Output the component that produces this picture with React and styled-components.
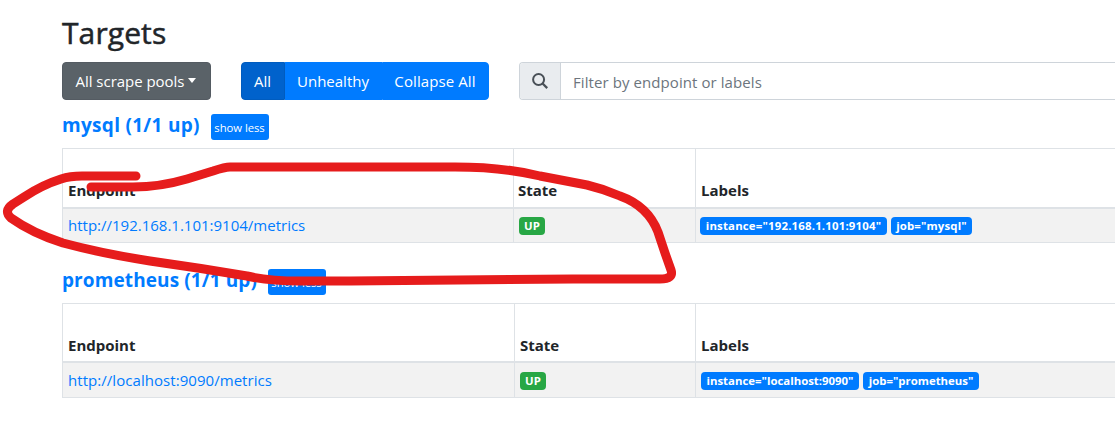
import React from "react";
import styled, { createGlobalStyle } from "styled-components";

const GlobalStyle = createGlobalStyle`
  *, *::before, *::after { box-sizing: border-box; }
  html, body { margin: 0; overflow: hidden; background: #fff; }
  body {
    font-family: "Open Sans", "Noto Sans", sans-serif;
    font-size: 15px;
    line-height: 24px;
    color: #212529;
  }
`;

const Page = styled.main`
  position: relative;
  width: 100%;
  height: 422px;
  padding: 14px 0 0 62px;
  overflow: hidden;
`;

const Title = styled.h2`
  margin: 0 0 10px;
  font-size: 30px;
  font-weight: 500;
  line-height: 38px;
  letter-spacing: 0.1px;
  -webkit-text-stroke: 0.5px #212529;
`;

const Toolbar = styled.div`
  display: flex;
  gap: 30px;
  height: 38px;
`;

const Button = styled.button`
  display: flex;
  align-items: center;
  justify-content: center;
  flex: none;
  width: ${(p) => p.$width}px;
  height: 38px;
  padding: 0 1px 1px 0;
  border: 1px solid ${(p) => p.$border || p.$bg};
  border-radius: 4px;
  background: ${(p) => p.$bg};
  color: #fff;
  font: inherit;
  letter-spacing: ${(p) => p.$track || 0}px;
  white-space: nowrap;
`;

const Caret = styled.span`
  margin: 0 0 0 4px;
  border-top: 5px solid #fff;
  border-left: 4.5px solid transparent;
  border-right: 4.5px solid transparent;
`;

const ButtonGroup = styled.div`
  display: flex;
  flex: none;

  ${Button} { border-radius: 0; }
  ${Button}:first-child { border-radius: 4px 0 0 4px; }
  ${Button}:last-child { border-radius: 0 4px 4px 0; }
`;

const Search = styled.div`
  display: flex;
  flex: 1;
  border: 1px solid #ced4da;
  border-right: 0;
  border-radius: 4px 0 0 4px;
  overflow: hidden;
`;

const SearchAddon = styled.div`
  display: flex;
  align-items: center;
  justify-content: center;
  width: 41px;
  border-right: 1px solid #ced4da;
  background: #e9ecef;
`;

const SearchInput = styled.input`
  flex: 1;
  min-width: 0;
  padding: 2px 12px 0;
  border: 0;
  outline: 0;
  background: #fff;
  font: inherit;
  letter-spacing: 0.08px;
  &::placeholder { color: #6c757d; opacity: 1; }
`;

const PoolHeader = styled.div`
  display: flex;
  align-items: center;
  gap: 11px;
  height: 26px;
  margin: ${(p) => p.$top}px 0 8px;
`;

const PoolName = styled.h3`
  flex: none;
  width: ${(p) => p.$width}px;
  margin: 0;
  padding-bottom: 3px;
  color: #007bff;
  font-size: 19px;
  font-weight: 700;
  line-height: 23px;
  letter-spacing: ${(p) => p.$track}px;
  white-space: nowrap;
`;

const ToggleButton = styled.button`
  width: 58px;
  height: 26px;
  padding: 1px 1px 0 0;
  border: 0;
  border-radius: 3px;
  background: #007bff;
  color: #fff;
  font-family: inherit;
  font-size: 11.3px;
  font-weight: 500;
  letter-spacing: -0.05px;
  white-space: nowrap;
`;

const Table = styled.div`
  width: 1080px;
  border: 1px solid #dee2e6;
`;

const Row = styled.div`
  display: grid;
  grid-template-columns: ${(p) => p.$first}px ${(p) => 632 - p.$first}px 1fr;
  height: ${(p) => p.$height}px;
`;

const HeadRow = styled(Row)`
  border-bottom: 2px solid #dee2e6;
  font-weight: 700;
`;

const BodyRow = styled(Row)`
  background: #f2f2f2;
`;

const Cell = styled.div`
  display: flex;
  align-items: ${(p) => (p.$head ? "flex-end" : "center")};
  gap: 4px;
  padding: 0 5px ${(p) => p.$bottom || 0}px ${(p) => p.$left || 5}px;
  border-left: 1px solid #dee2e6;
  &:first-child { border-left: 0; }
`;

const Link = styled.a`
  color: #007bff;
  text-decoration: none;
  letter-spacing: ${(p) => p.$track}px;
`;

const Badge = styled.span`
  display: flex;
  align-items: center;
  justify-content: center;
  width: ${(p) => p.$width}px;
  height: 18px;
  margin-top: 2px;
  border-radius: 4px;
  background: ${(p) => p.$bg || "#007bff"};
  color: #fff;
  font-size: 11.4px;
  font-weight: 700;
  line-height: 18px;
  letter-spacing: ${(p) => p.$track || 0}px;
  white-space: nowrap;
`;

const Annotation = styled.svg`
  position: absolute;
  top: 0;
  left: 0;
  pointer-events: none;
`;

const pools = [
  {
    name: "mysql (1/1 up)", nameWidth: 138, nameTrack: 0.3, top: 14, first: 450, head: 60, body: 33,
    headBottom: 5, bodyBottom: 1, labelLeft: 4,
    url: "http://192.168.1.101:9104/metrics", urlTrack: 0,
    labels: [
      { text: 'instance="192.168.1.101:9104"', width: 187, track: 0.19 },
      { text: 'job="mysql"', width: 81, track: 0.15 },
    ],
  },
  {
    name: "prometheus (1/1 up)", nameWidth: 195, nameTrack: 0.1, top: 26, first: 451, head: 59, body: 34,
    headBottom: 4, bodyBottom: 0, labelLeft: 5,
    url: "http://localhost:9090/metrics", urlTrack: 0.05,
    labels: [
      { text: 'instance="localhost:9090"', width: 158, track: 0 },
      { text: 'job="prometheus"', width: 116, track: 0 },
    ],
  },
];

function Pool({ pool }) {
  return (
    <section>
      <PoolHeader $top={pool.top}>
        <PoolName $width={pool.nameWidth} $track={pool.nameTrack}>{pool.name}</PoolName>
        <ToggleButton>show less</ToggleButton>
      </PoolHeader>
      <Table>
        <HeadRow $first={pool.first} $height={pool.head}>
          <Cell $head $bottom={pool.headBottom}>Endpoint</Cell>
          <Cell $head $bottom={pool.headBottom} $left={pool.labelLeft}>State</Cell>
          <Cell $head $bottom={pool.headBottom}>Labels</Cell>
        </HeadRow>
        <BodyRow $first={pool.first} $height={pool.body}>
          <Cell $bottom={pool.bodyBottom}><Link $track={pool.urlTrack}>{pool.url}</Link></Cell>
          <Cell $bottom={pool.bodyBottom}><Badge $bg="#28a745" $width={26}>UP</Badge></Cell>
          <Cell $bottom={pool.bodyBottom} $left={pool.labelLeft}>
            {pool.labels.map((l) => (
              <Badge key={l.text} $width={l.width} $track={l.track}>{l.text}</Badge>
            ))}
          </Cell>
        </BodyRow>
      </Table>
    </section>
  );
}

export default function App() {
  return (
    <>
      <GlobalStyle />
      <Page>
        <Title>Targets</Title>
        <Toolbar>
          <Button $width={149} $bg="#5a6268" $border="#545b62" $track={-0.03}>All scrape pools<Caret /></Button>
          <ButtonGroup>
            <Button $width={44} $bg="#0062cc" $border="#005cbf">All</Button>
            <Button $width={97} $bg="#007bff">Unhealthy</Button>
            <Button $width={107} $bg="#007bff" $track={0.1}>Collapse All</Button>
          </ButtonGroup>
          <Search>
            <SearchAddon>
              <svg width="16" height="16" viewBox="0 0 16 16" fill="none" stroke="#495057">
                <circle cx="6.600" cy="6.500" r="5.500" strokeWidth="2" />
                <path d="M10.600 10.500L15.200 15.100" strokeWidth="2.300" />
              </svg>
            </SearchAddon>
            <SearchInput placeholder="Filter by endpoint or labels" />
          </Search>
        </Toolbar>
        {pools.map((p) => <Pool key={p.name} pool={p} />)}
        <Annotation width="1115" height="422" viewBox="0 0 1115 422" fill="none">
          <path
            d="M136 176 H82 Q70 176 61 179 Q42 185 24 197 L13 204 Q3 211 11 218 Q32 233 63 243 Q100 253 150 261 Q200 268 247 276 Q268 281 300 281 H350 L457 280 L573 279 H660 Q674 279 671 270 L665 253 L658 232 Q648 206 620 196 Q604 189 587 185 L540 176 Q503 167 455 167 H230 Q225 167 213 171 L187 179 Q160 187 133 187 H91"
            stroke="#e61c1c" strokeWidth="9" strokeLinecap="round" strokeLinejoin="round"
          />
        </Annotation>
      </Page>
    </>
  );
}
